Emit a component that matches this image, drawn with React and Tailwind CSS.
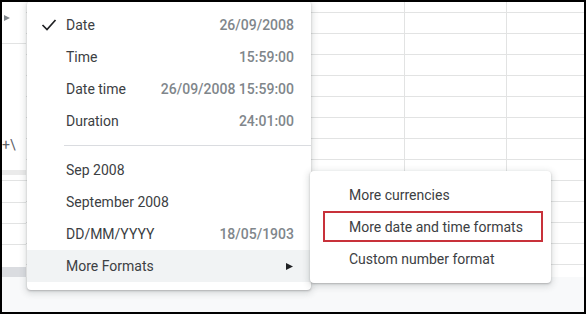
import React from 'react';

const menuShadow =
  'shadow-[0_1px_2px_rgba(60,64,67,0.3),0_2px_6px_2px_rgba(60,64,67,0.15)]';

const formats = [
  { label: 'Date', value: '26/09/2008', checked: true },
  { label: 'Time', value: '15:59:00' },
  { label: 'Date time', value: '26/09/2008 15:59:00' },
  { label: 'Duration', value: '24:01:00' },
];

const formats2 = [
  { label: 'Sep 2008', value: '' },
  { label: 'September 2008', value: '' },
  { label: 'DD/MM/YYYY', value: '18/05/1903' },
];

const Triangle = ({ className }) => (
  <svg width="7" height="7" viewBox="0 0 7 7" className={className}>
    <path d="M0 0 L7 3.5 L0 7 Z" fill="currentColor" />
  </svg>
);

const LeftStrip = () => (
  <div className="w-[26px] h-full flex flex-col overflow-hidden">
    <div className="h-[44px] border-b border-[#e2e3e3] pt-[15px] pl-[4px]">
      <Triangle className="text-[#80868b] w-[6px] h-[6px]" />
    </div>
    <div className="h-[126px] flex items-end pb-[14px] pl-[2px] text-[14px] text-[#5f6368]">
      +\
    </div>
    <div className="h-[5px] bg-[#ebebeb]" />
    <div className="h-[6px] border-b border-[#e2e3e3]" />
    <div className="h-[22px] border-b border-[#e2e3e3]" />
    <div className="h-[21px] border-b border-[#e2e3e3]" />
    <div className="h-[21px] border-b border-[#e2e3e3]" />
    <div className="h-[22px]" />
    <div className="h-[10px] bg-[#dadce0]" />
  </div>
);

const Column = ({ className }) => (
  <div className={`flex flex-col border-r border-[#e2e3e3] ${className}`}>
    <div className="h-[13px] border-b border-[#e2e3e3]" />
    {Array.from({ length: 12 }).map((_, i) => (
      <div key={i} className="h-[21px] shrink-0 border-b border-[#e2e3e3]" />
    ))}
  </div>
);

const MenuItem = ({ label, value, checked, highlight, arrow }) => (
  <div
    className={`relative h-[32px] flex items-center justify-between pl-[39px] pr-[17px] ${
      highlight ? 'bg-[#f1f3f4]' : ''
    }`}
  >
    {checked && (
      <svg
        width="16"
        height="14"
        viewBox="0 0 16 14"
        className="absolute left-[14px] top-[9px]"
      >
        <path
          d="M1.5 7 L6 11.5 L14.5 2"
          fill="none"
          stroke="#202124"
          strokeWidth="1.7"
        />
      </svg>
    )}
    <span className="text-[#3c4043]">{label}</span>
    {value && <span className="text-[#80868b] font-medium">{value}</span>}
    {arrow && <Triangle className="text-[#202124] mr-[1px]" />}
  </div>
);

export default function App() {
  return (
    <div className="relative w-[586px] h-[314px] overflow-hidden bg-white font-['Roboto',sans-serif] text-[14px]">
      <div className="flex flex-col h-full">
        <div className="flex h-[277px]">
          <LeftStrip />
          <Column className="w-[379px]" />
          <Column className="w-[102px]" />
          <Column className="flex-1" />
        </div>
        <div className="flex-1 bg-[#f8f9fa]" />
      </div>

      <div
        className={`absolute left-[27px] top-[1px] w-[284px] bg-white rounded-[4px] py-[8px] ${menuShadow}`}
      >
        {formats.map((f) => (
          <MenuItem key={f.label} {...f} />
        ))}
        <div className="my-[8px] ml-[37px] h-px bg-[#dadce0]" />
        {formats2.map((f) => (
          <MenuItem key={f.label} {...f} />
        ))}
        <MenuItem label="More Formats" highlight arrow />
      </div>

      <div
        className={`absolute left-[310px] top-[171px] w-[241px] bg-white rounded-[4px] py-[8px] ${menuShadow}`}
      >
        <div className="h-[32px] flex items-center pl-[39px] text-[#3c4043]">
          More currencies
        </div>
        <div className="relative h-[32px] flex items-center pl-[39px] text-[#3c4043]">
          More date and time formats
          <span className="absolute left-[13px] w-[220px] top-0 h-[31px] border-2 border-[#c8313a]" />
        </div>
        <div className="h-[32px] flex items-center pl-[39px] text-[#3c4043]">
          Custom number format
        </div>
      </div>

      <div className="pointer-events-none absolute inset-0 border-2 border-black" />
    </div>
  );
}
